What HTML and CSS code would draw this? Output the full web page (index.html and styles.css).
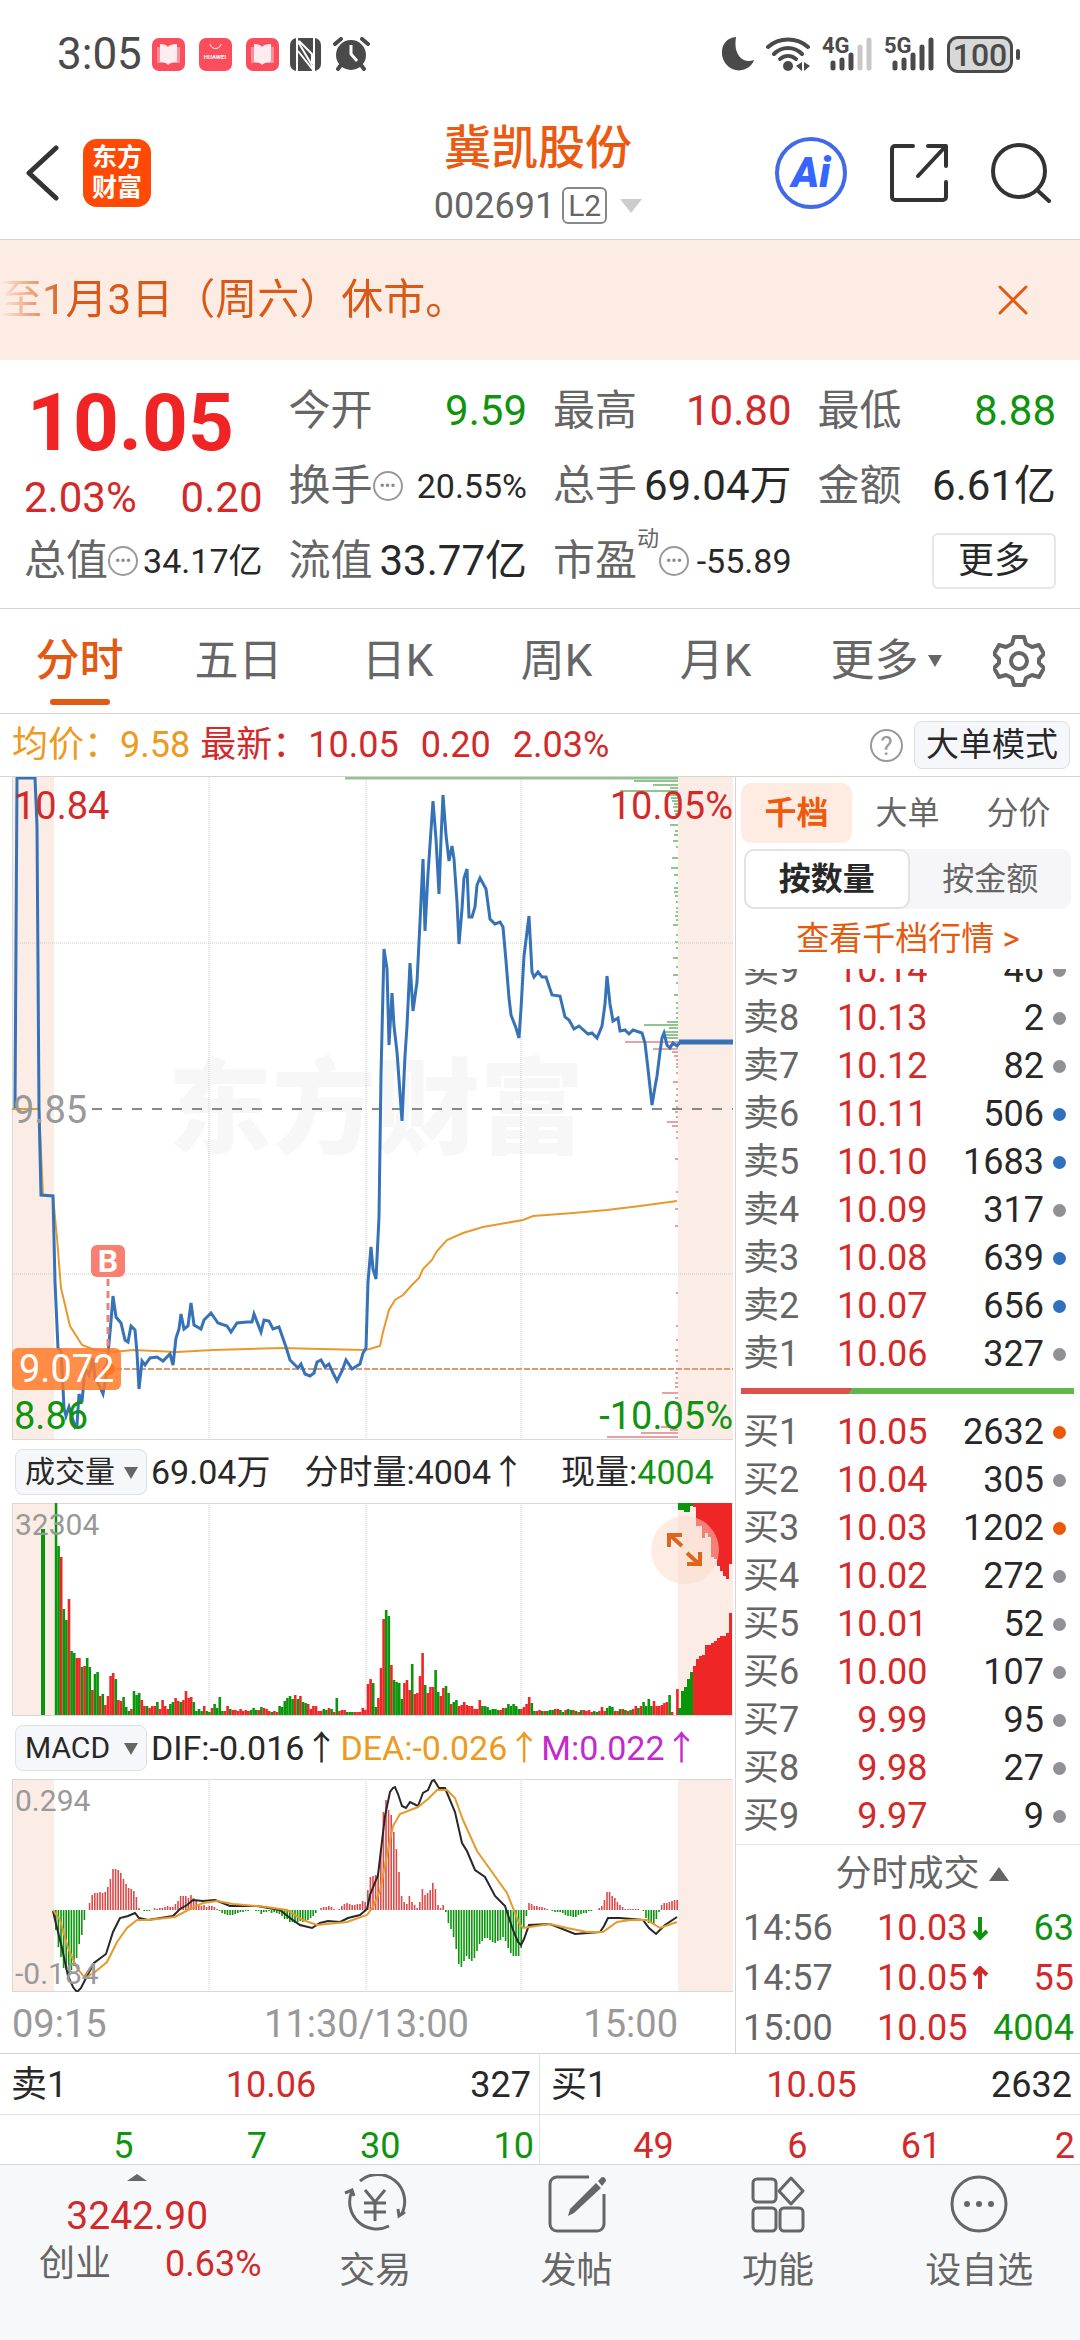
FILE: index.html
```html
<!DOCTYPE html>
<html lang="zh-CN">
<head>
<meta charset="UTF-8">
<meta name="viewport" content="width=device-width, initial-scale=1.0">
<title>冀凯股份 002691</title>
<link rel="stylesheet" href="styles.css">
</head>
<body>
    <div class="statusbar">
        <span class="time">3:05</span>
        <svg class="app-dot" viewBox="0 0 33 33"><rect width="33" height="33" rx="7" fill="#fb4d5c"/><path d="M5 9h23v16H5z" fill="#fd8f98"/><path d="M8 6c4 0 7 1 8 3 1-2 5-3 9-3v18c-4 0-7 1-9 3-1-2-4-3-8-3z" fill="#ffecee"/></svg>
        <svg class="app-dot" viewBox="0 0 33 33"><rect width="33" height="33" rx="7" fill="#fb4d5c"/><path d="M11 6c1 6 10 6 11 0" fill="none" stroke="#fff" stroke-width="1"/><text x="16" y="21" text-anchor="middle" font-size="6" font-weight="700" fill="#fff">HUAWEI</text></svg>
        <svg class="app-dot" viewBox="0 0 33 33"><rect width="33" height="33" rx="7" fill="#fb4d5c"/><path d="M5 9h23v16H5z" fill="#fd8f98"/><path d="M8 6c4 0 7 1 8 3 1-2 5-3 9-3v18c-4 0-7 1-9 3-1-2-4-3-8-3z" fill="#ffecee"/></svg>
        <svg width="31" height="33" viewBox="0 0 31 33"><rect x="0" y="0" width="31" height="33" rx="7" fill="#4a4a4a"/><path d="M7 0v33M7 2l16 27V33M24 33V0M8 13l15 19M9 3l13 13v10" fill="none" stroke="#fff" stroke-width="2"/></svg>
        <svg class="alarm" width="37" height="34" viewBox="0 0 37 34"><circle cx="18" cy="18" r="15" fill="#4a4a4a"/><path d="M2 7l6-5M35 7l-6-5M8 28l-3 4M28 28l3 4" stroke="#4a4a4a" stroke-width="4" stroke-linecap="round"/><path d="M18 8v9l6 7" fill="none" stroke="#fff" stroke-width="3"/></svg>
        <span class="spacer"></span>
        <svg class="moon" width="32" height="34" viewBox="0 0 32 34"><path d="M14 0C3 1-1 10 0 18c2 11 11 17 20 15 6-1 11-6 12-10-6 2-11 1-15-4-4-6-4-12-3-19z" fill="#4a4a4a"/></svg>
        <svg class="wifi" width="45" height="34" viewBox="0 0 45 34"><g fill="none" stroke="#4a4a4a" stroke-width="4" stroke-linecap="round"><path d="M2 10C13 0 31 0 42 10"/><path d="M8 17c8-8 20-8 28 0"/><path d="M14 22c5-4 11-4 16 0"/></g><circle cx="22" cy="29" r="5" fill="#4a4a4a"/><path d="M36 25v9l-6-5zM38 25v9l6-5z" fill="#4a4a4a"/></svg>
        <span class="signal">
            <b>4G</b>
            <svg width="50" height="34" viewBox="0 0 50 34"><g stroke-width="5" stroke-linecap="round" stroke="#4a4a4a"><path d="M10 26v5M19 23v8M28 18v13"/><path d="M37 10v21M46 3v28" stroke="#c8c8c8"/></g></svg>
        </span>
        <span class="signal">
            <b>5G</b>
            <svg width="50" height="34" viewBox="0 0 50 34"><g stroke-width="5" stroke-linecap="round" stroke="#4a4a4a"><path d="M10 26v5M19 23v8M28 18v13M37 10v21M46 3v28"/></g></svg>
        </span>
        <span class="battery">100</span>
    </div>

    <header class="nav">
        <div class="nav-left">
            <button class="icon-btn" aria-label="返回"><svg width="34" height="56" viewBox="0 0 34 56"><path d="M31 3L4 28l27 25" fill="none" stroke="#333" stroke-width="5" stroke-linecap="round" stroke-linejoin="round"/></svg></button>
            <a class="logo" href="#">东方<br>财富</a>
        </div>
        <div class="nav-title">
            <h1>冀凯股份</h1>
            <div class="code">002691<span class="level">L2</span><i class="tri tri-light"></i></div>
        </div>
        <div class="nav-right">
            <button class="icon-btn ai">Ai</button>
            <button class="icon-btn" aria-label="分享"><svg width="60" height="60" viewBox="0 0 60 60"><path d="M24 3H6a3 3 0 0 0-3 3v48a3 3 0 0 0 3 3h48a3 3 0 0 0 3-3V39M39 3h18v20M56 4L29 33" fill="none" stroke="#333" stroke-width="4" stroke-linecap="round" stroke-linejoin="round"/></svg></button>
            <button class="icon-btn" aria-label="搜索"><svg width="60" height="60" viewBox="0 0 60 60"><circle cx="28" cy="28" r="26" fill="none" stroke="#333" stroke-width="4"/><path d="M46 47l12 11" stroke="#333" stroke-width="4" stroke-linecap="round"/></svg></button>
        </div>
    </header>

    <div class="notice">
        <p>至1月3日（周六）休市。</p>
        <button class="icon-btn" aria-label="关闭"><svg width="30" height="30" viewBox="0 0 30 30"><path d="M2 2l26 26M28 2L2 28" stroke="#e05a14" stroke-width="3" stroke-linecap="round"/></svg></button>
    </div>

    <section class="quote">
        <div class="price">
            <strong>10.05</strong>
            <div class="pair red"><span>2.03%</span><span>0.20</span></div>
        </div>
        <div class="pair"><span>今开</span><b class="green">9.59</b></div>
        <div class="pair"><span>最高</span><b class="red">10.80</b></div>
        <div class="pair"><span>最低</span><b class="green">8.88</b></div>
        <div class="pair"><span>换手<i class="info">•••</i></span><b class="small">20.55%</b></div>
        <div class="pair"><span>总手</span><b>69.04万</b></div>
        <div class="pair"><span>金额</span><b>6.61亿</b></div>
        <div class="pair"><span>总值<i class="info">•••</i></span><b class="small">34.17亿</b></div>
        <div class="pair"><span>流值</span><b>33.77亿</b></div>
        <div class="pair"><span>市盈<sup>动</sup><i class="info">•••</i></span><b class="small">-55.89</b></div>
        <div class="pair more"><button>更多</button></div>
    </section>

    <nav class="tabs">
        <button class="active">分时</button>
        <button>五日</button>
        <button>日K</button>
        <button>周K</button>
        <button>月K</button>
        <button>更多<i class="tri tri-tab"></i></button>
        <button aria-label="设置"><svg width="52" height="52" viewBox="0 0 52 52"><path d="M21 2h10l2 7 6 3 7-2 5 9-5 5v4l5 5-5 9-7-2-6 3-2 7H21l-2-7-6-3-7 2-5-9 5-5v-4l-5-5 5-9 7 2 6-3z" fill="none" stroke="#666" stroke-width="4" stroke-linejoin="round"/><circle cx="26" cy="26" r="8" fill="none" stroke="#666" stroke-width="4"/></svg></button>
    </nav>

    <div class="summary">
        <span class="orange">均价：9.58</span>
        <span class="red">最新：10.05</span>
        <span class="red">0.20</span>
        <span class="red">2.03%</span>
        <i class="help">?</i>
        <button class="chip">大单模式</button>
    </div>

    <main class="board">
        <div class="charts">
            <div class="chart">
                <svg viewBox="0 0 721 663">
                    <rect class="shade" x="0" y="0" width="42" height="663"/>
                    <rect class="shade" x="666" y="0" width="55" height="663"/>
                    <text class="watermark" x="156" y="369">东方财富</text>
                    <path class="grid" d="M197 0v663M354 0v663M509 0v663M0 166h721M0 497h721"/>
                    <path class="frame" d="M0 0v663M0 663h721"/>
                    <path d="M80 332h641" stroke="#888" stroke-width="2" stroke-dasharray="10 10"/>
                    <path d="M333 1h333" stroke="#92c492" stroke-width="3"/>
                    <g id="depth"></g>
                    <path d="M104 592h617" stroke="#d99a78" stroke-width="2" stroke-dasharray="6 2"/>
                    <polyline class="avg" points="0,332 27,332 31,418 41,419 45,461 49,511 58,549 70,568 83,573 101,575 121,573 165,575 201,573 271,571 308,572 354,573 368,569 371,555 377,533 383,523 391,518 400,508 407,501 411,492 420,483 425,474 435,463 451,456 471,450 511,443 521,439 561,436 595,433 628,429 665,424"/>
                    <polyline class="line" points="3,331 5,1 23,1 25,49 27,331 29,418 41,419 43,505 46,571 49,574 51,611 52,631 54,639 57,630 61,643 63,650 65,648 67,617 70,625 73,591 77,598 81,581 83,602 87,608 91,617 94,600 99,544 101,519 104,540 109,546 113,563 116,565 119,549 123,553 125,576 127,612 130,584 133,588 138,581 145,580 151,584 158,577 161,588 164,561 167,552 169,537 172,552 176,549 179,526 182,548 189,552 192,543 199,536 206,546 215,549 219,555 225,546 235,545 240,545 242,537 249,555 252,543 257,544 261,552 267,550 274,570 278,583 286,591 289,587 293,597 298,599 302,596 305,585 309,583 313,590 317,587 321,596 325,604 330,594 334,583 340,592 348,587 351,576 354,571 356,505 359,470 361,492 364,502 367,440 369,297 372,172 375,192 377,268 380,216 382,249 385,275 390,344 393,279 395,249 398,186 401,234 405,205 408,145 411,82 413,154 416,97 421,24 424,62 427,117 429,62 431,18 434,58 437,84 440,69 442,82 445,125 447,167 450,132 452,101 455,92 457,140 460,140 463,130 465,108 468,101 474,112 478,142 483,147 488,145 491,150 494,184 497,221 499,238 504,251 507,261 509,232 512,179 517,139 520,195 522,200 526,195 530,200 534,200 540,218 548,219 553,240 557,243 562,252 567,249 576,257 580,256 585,261 590,249 593,227 595,199 598,227 601,244 606,241 608,254 613,253 617,257 621,253 630,256 633,266 636,292 640,328 643,310 645,299 648,275 650,261 652,256 655,268 658,271 661,266 665,269 668,265"/>
                    <path d="M667 265h54" stroke="#3572b8" stroke-width="5"/>
                    <path d="M96 502v90" stroke="#e8837b" stroke-width="3" stroke-dasharray="7 5"/>
                    <rect x="79" y="468" width="34" height="32" rx="6" fill="#f97f70"/>
                    <text class="buy" x="96" y="495">B</text>
                    <circle cx="97" cy="592" r="6" fill="#ff5a00"/>
                </svg>
                <span class="lab lab-top red">10.84</span>
                <span class="lab lab-mid">9.85</span>
                <span class="lab lab-cost">9.072</span>
                <span class="lab lab-bottom green">8.86</span>
                <span class="lab lab-top lab-right red">10.05%</span>
                <span class="lab lab-bottom lab-right green">-10.05%</span>
            </div>

            <div class="legend">
                <label class="pick"><select class="chip" aria-label="指标一"><option>成交量</option></select></label>
                <span class="vol-total">69.04万</span>
                <span class="vol-minute">分时量:4004↑</span>
                <span>现量:<b class="green">4004</b></span>
            </div>
            <div class="chart">
                <svg viewBox="0 0 721 213">
                    <rect class="shade" x="0" y="0" width="42" height="213"/>
                    <rect class="shade" x="666" y="0" width="55" height="213"/>
                    <path class="grid" d="M197 0v213M354 0v213M509 0v213"/>
                    <path class="frame" d="M0 213V0h721M0 213h721"/>
                    <g id="volume"></g>
                </svg>
                <span class="lab lab-small">32304</span>
                <button class="expand" aria-label="放大"><svg width="36" height="36" viewBox="0 0 36 36"><path d="M15 14L3 3M2 15V3h13M20 21l12 11M33 20v12H20" fill="none" stroke="#e0641c" stroke-width="4"/></svg></button>
            </div>

            <div class="legend">
                <label class="pick"><select class="chip" aria-label="指标二"><option>MACD</option></select></label>
                <span class="dif-value">DIF:-0.016↑</span>
                <span class="orange">DEA:-0.026↑</span>
                <span class="purple">M:0.022↑</span>
            </div>
            <div class="chart">
                <svg viewBox="0 0 721 213">
                    <rect class="shade" x="0" y="0" width="42" height="213"/>
                    <rect class="shade" x="666" y="0" width="55" height="213"/>
                    <path class="grid" d="M197 0v213M354 0v213M509 0v213"/>
                    <path class="frame" d="M0 213V0h721M0 213h721"/>
                    <g id="macd"></g>
                    <polyline class="dif" points="41,132 44,145 50,169 56,197 61,208 65,213 69,209 73,201 82,184 94,175 101,153 108,139 116,137 123,134 127,139 136,141 161,137 168,130 175,126 181,121 191,122 203,121 218,127 245,127 268,131 278,139 288,146 300,149 308,144 316,142 328,143 336,139 348,136 355,130 358,116 366,96 373,37 378,13 381,9 383,8 386,15 390,27 394,29 398,23 406,27 411,14 416,11 420,2 422,1 427,9 433,9 443,33 450,64 455,72 463,91 473,98 483,117 493,127 501,151 506,163 509,166 512,160 517,146 538,145 563,155 588,153 592,147 596,139 608,139 631,141 637,149 644,155 653,146 665,138"/>
                    <polyline class="dea" points="41,131 48,141 56,169 65,189 73,199 83,193 95,183 105,163 115,149 125,141 136,141 163,138 178,130 191,124 205,122 221,125 255,128 275,131 291,141 305,146 335,143 355,136 361,128 368,112 375,76 381,47 388,35 406,28 416,20 425,11 435,11 443,19 451,41 465,72 485,100 495,114 503,134 507,144 511,149 538,145 555,149 575,153 591,153 605,143 618,141 635,141 648,149 665,143"/>
                </svg>
                <span class="lab lab-small">0.294</span>
                <span class="lab lab-small lab-low">-0.184</span>
            </div>
            <div class="axis"><span>09:15</span><span>11:30/13:00</span><span class="axis-end">15:00</span></div>
        </div>

        <aside class="side">
            <div class="side-tabs">
                <button class="active">千档</button>
                <button>大单</button>
                <button>分价</button>
            </div>
            <div class="segment">
                <button class="active">按数量</button>
                <button>按金额</button>
            </div>
            <a class="depth-link" href="#">查看千档行情 &gt;</a>
            <div class="asks">
                <table class="book">
                    <tr><th>卖9</th><td>10.14</td><td>46</td><td><i class="dot"></i></td></tr>
                    <tr><th>卖8</th><td>10.13</td><td>2</td><td><i class="dot"></i></td></tr>
                    <tr><th>卖7</th><td>10.12</td><td>82</td><td><i class="dot"></i></td></tr>
                    <tr><th>卖6</th><td>10.11</td><td>506</td><td><i class="dot dot-blue"></i></td></tr>
                    <tr><th>卖5</th><td>10.10</td><td>1683</td><td><i class="dot dot-blue"></i></td></tr>
                    <tr><th>卖4</th><td>10.09</td><td>317</td><td><i class="dot"></i></td></tr>
                    <tr><th>卖3</th><td>10.08</td><td>639</td><td><i class="dot dot-blue"></i></td></tr>
                    <tr><th>卖2</th><td>10.07</td><td>656</td><td><i class="dot dot-blue"></i></td></tr>
                    <tr><th>卖1</th><td>10.06</td><td>327</td><td><i class="dot"></i></td></tr>
                </table>
            </div>
            <div class="ratio"></div>
            <table class="book">
                <tr><th>买1</th><td>10.05</td><td>2632</td><td><i class="dot dot-orange"></i></td></tr>
                <tr><th>买2</th><td>10.04</td><td>305</td><td><i class="dot"></i></td></tr>
                <tr><th>买3</th><td>10.03</td><td>1202</td><td><i class="dot dot-orange"></i></td></tr>
                <tr><th>买4</th><td>10.02</td><td>272</td><td><i class="dot"></i></td></tr>
                <tr><th>买5</th><td>10.01</td><td>52</td><td><i class="dot"></i></td></tr>
                <tr><th>买6</th><td>10.00</td><td>107</td><td><i class="dot"></i></td></tr>
                <tr><th>买7</th><td>9.99</td><td>95</td><td><i class="dot"></i></td></tr>
                <tr><th>买8</th><td>9.98</td><td>27</td><td><i class="dot"></i></td></tr>
                <tr><th>买9</th><td>9.97</td><td>9</td><td><i class="dot"></i></td></tr>
            </table>
            <button class="deals-head">分时成交<i class="tri tri-up"></i></button>
            <table class="deals">
                <tr><th>14:56</th><td>10.03</td><td><svg width="17" height="24" viewBox="0 0 17 24"><path d="M8 1v20M2 15l6 7 7-7" fill="none" stroke="#109410" stroke-width="4"/></svg></td><td class="green">63</td></tr>
                <tr><th>14:57</th><td>10.05</td><td><svg width="17" height="24" viewBox="0 0 17 24"><path d="M8 23V3M2 9l6-7 7 7" fill="none" stroke="#d22a2a" stroke-width="4"/></svg></td><td>55</td></tr>
                <tr><th>15:00</th><td>10.05</td><td></td><td class="green">4004</td></tr>
            </table>
        </aside>
    </main>

    <section class="level1">
        <div class="best"><span>卖1</span><b class="red">10.06</b><span>327</span></div>
        <div class="best"><span>买1</span><b class="red">10.05</b><span>2632</span></div>
        <div class="queue green"><span>5</span><span>7</span><span>30</span><span>10</span></div>
        <div class="queue red"><span>49</span><span>6</span><span>61</span><span>2</span></div>
    </section>

    <footer class="bottom">
        <a class="index" href="#">
            <i class="tri tri-up tri-small"></i>
            <strong>3242.90</strong>
            <span class="index-row"><span>创业</span><span class="red">0.63%</span></span>
        </a>
        <button><svg width="64" height="60" viewBox="0 0 64 60"><g fill="none" stroke="#666" stroke-width="3"><path d="M17 7a27 27 0 0 1 41 34M46 52A27 27 0 0 1 9 17M2 19l7-3 2 6M62 38l-6 4-1-7"/><path d="M22 16l10 12 10-12M32 28v19M21 29h22M21 38h22"/></g></svg>交易</button>
        <button><svg width="60" height="60" viewBox="0 0 60 60"><path d="M42 3H10a7 7 0 0 0-7 7v40a7 7 0 0 0 7 7h40a7 7 0 0 0 7-7V20" fill="none" stroke="#666" stroke-width="3"/><path d="M49 9l5 5-27 25-6 3 2-7zM51 7l4-4c3 0 4 2 4 4l-4 5z" fill="#666"/></svg>发帖</button>
        <button><svg width="56" height="60" viewBox="0 0 56 60"><g fill="none" stroke="#666" stroke-width="3" stroke-linejoin="round"><rect x="3" y="5" width="23" height="23" rx="4"/><rect x="3" y="34" width="23" height="23" rx="4"/><rect x="30" y="34" width="23" height="23" rx="4"/><path d="M41 4l12 13-12 13-12-13z"/></g></svg>功能</button>
        <button><svg width="60" height="60" viewBox="0 0 60 60"><circle cx="30" cy="30" r="27" fill="none" stroke="#666" stroke-width="3"/><circle cx="18" cy="30" r="3" fill="#666"/><circle cx="30" cy="30" r="3" fill="#666"/><circle cx="42" cy="30" r="3" fill="#666"/></svg>设自选</button>
    </footer>

<script src="script.js"></script>
</body>
</html>
```
FILE: styles.css
```css
* {
    box-sizing: border-box;
}
body {
    margin: 0;
    min-height: 100vh;
    display: flex;
    flex-direction: column;
    background-color: #fff;
    color: #282828;
    font-family: Roboto, "Noto Sans CJK SC", sans-serif;
    font-size: 36px;
    line-height: 48px;
}
button, select {
    padding: 0;
    border: 0;
    background: none;
    color: inherit;
    font: inherit;
    cursor: pointer;
}
a {
    color: inherit;
    text-decoration: none;
}
b, i, th {
    font-weight: 400;
    font-style: normal;
}
svg {
    display: block;
}
.red { color: #d22a2a; }
.green { color: #109410; }
.orange { color: #ec9a20; }
.purple { color: #c42acb; }

/* triangles */
.tri {
    display: inline-block;
    border: 7px solid transparent;
    border-bottom-width: 0;
    border-top: 12px solid #666;
}
.tri-light {
    margin-left: 6px;
    border-width: 14px 11px 0;
    border-top-color: #ccc;
}
.tri-up {
    border-width: 0 10px 14px;
    border-bottom-color: #666;
}
.tri-small {
    border-width: 0 10px 7px;
}

/* status bar */
.statusbar {
    display: flex;
    align-items: center;
    height: 108px;
    padding: 0 67px 0 57px;
    color: #4a4a4a;
}
.time {
    margin-right: 10px;
    font-size: 44px;
}
.app-dot {
    width: 33px;
    height: 33px;
    margin-right: 14px;
}
.app-dot + svg:not(.app-dot) {
    margin-left: -3px;
}
.alarm {
    margin-left: 12px;
}
.spacer {
    flex: 1;
}
.wifi {
    margin: 0 12px;
}
.signal {
    position: relative;
    margin-right: 12px;
}
.signal b {
    position: absolute;
    top: -3px;
    left: -1px;
    font-size: 22px;
    font-weight: 700;
    line-height: 24px;
}
.battery {
    position: relative;
    width: 66px;
    height: 37px;
    border: 3px solid #4a4a4a;
    border-radius: 11px;
    background-color: #d8d8d8;
    font-size: 32px;
    font-weight: 500;
    line-height: 32px;
    text-align: center;
}
.battery::after {
    content: "";
    position: absolute;
    top: 10px;
    right: -10px;
    width: 4px;
    height: 11px;
    border-radius: 2px;
    background-color: #4a4a4a;
}

/* title bar */
.nav {
    display: grid;
    grid-template-columns: 1fr auto 1fr;
    align-items: center;
    height: 132px;
    padding: 0 29px 2px 25px;
    border-bottom: 1px solid #d5d5d5;
}
.nav-left, .nav-right {
    display: flex;
    align-items: center;
    gap: 24px;
}
.nav-right {
    justify-content: flex-end;
    gap: 42px;
}
.logo {
    width: 68px;
    height: 68px;
    padding: 4px 0;
    border-radius: 14px;
    background-color: #ff4a05;
    color: #fff;
    font-size: 25px;
    font-weight: 700;
    line-height: 30px;
    text-align: center;
}
.nav-title {
    padding-top: 2px;
    text-align: center;
}
.nav-title h1 {
    margin: 0;
    color: #ea5a12;
    font-size: 47px;
    font-weight: 500;
    line-height: 64px;
}
.code {
    display: flex;
    align-items: center;
    justify-content: center;
    gap: 7px;
    height: 52px;
    color: #666;
}
.level {
    padding: 0 4px;
    border: 2px solid #888;
    border-radius: 6px;
    font-size: 30px;
    line-height: 33px;
}
.ai {
    width: 72px;
    height: 72px;
    border: 4px solid #4169e8;
    border-radius: 50%;
    color: #3566ff;
    font-size: 42px;
    font-weight: 900;
    font-style: italic;
    line-height: 60px;
}

/* notice */
.notice {
    display: flex;
    align-items: center;
    justify-content: space-between;
    height: 120px;
    padding-right: 52px;
    background-color: #fcece3;
    color: #d95a18;
    font-size: 42px;
}
.notice p {
    margin: 0;
    mask-image: linear-gradient(to right, transparent, #000 64px);
}

/* quote */
.quote {
    display: grid;
    grid-template-columns: repeat(4, 1fr);
    grid-auto-rows: 75px;
    column-gap: 26px;
    padding: 13px 24px 10px;
    border-bottom: 1px solid #d5d5d5;
    font-size: 42px;
    white-space: nowrap;
}
.price {
    grid-row: span 2;
}
.price strong {
    display: block;
    padding-left: 3px;
    color: #f02424;
    font-size: 80px;
    font-weight: 700;
    line-height: 101px;
}
.pair {
    display: flex;
    align-items: center;
    justify-content: space-between;
    color: #666;
}
.pair span {
    display: flex;
    align-items: center;
}
.pair b {
    color: #282828;
}
.pair.red, .pair .red {
    color: #d22a2a;
}
.pair .green {
    color: #109410;
}
.pair .small {
    font-size: 34px;
}
.pair sup {
    align-self: flex-start;
    margin-top: -10px;
    font-size: 22px;
    line-height: 24px;
}
.info {
    width: 30px;
    height: 30px;
    border: 2px solid #999;
    border-radius: 50%;
    color: #888;
    font-size: 16px;
    line-height: 26px;
    text-align: center;
}
.more {
    justify-content: flex-end;
}
.more button {
    width: 124px;
    height: 56px;
    border: 2px solid #e4e6e8;
    border-radius: 6px;
    color: #282828;
    font-size: 36px;
    line-height: 48px;
}

/* period tabs */
.tabs {
    display: grid;
    grid-template-columns: repeat(5, 159fr) 182fr 83fr;
    height: 105px;
    padding-right: 20px;
    border-bottom: 1px solid #d5d5d5;
    color: #666;
    font-size: 44px;
}
.tabs button {
    position: relative;
    display: flex;
    align-items: center;
    justify-content: center;
    gap: 9px;
}
.tabs .active {
    color: #e05a14;
    font-weight: 500;
}
.tabs .active::after {
    content: "";
    position: absolute;
    bottom: 8px;
    left: 50%;
    width: 60px;
    height: 6px;
    margin-left: -30px;
    border-radius: 3px;
    background-color: #e05a14;
}

.summary {
    display: flex;
    align-items: center;
    gap: 22px;
    height: 63px;
    padding: 0 10px 0 12px;
    border-bottom: 1px solid #d5d5d5;
}
.summary .orange {
    margin-right: -12px;
}
.help {
    width: 33px;
    height: 33px;
    margin-left: auto;
    margin-right: -11px;
    border: 2px solid #999;
    border-radius: 50%;
    color: #999;
    font-size: 26px;
    line-height: 30px;
    text-align: center;
}
.chip {
    height: 48px;
    padding: 0 11px;
    border: 1px solid #dcdfe3;
    border-radius: 8px;
    background-color: #f6f7fa;
    font-size: 33px;
    line-height: 44px;
}

/* charts */
.board {
    display: grid;
    grid-template-columns: 736fr 344fr;
    border-bottom: 1px solid #d5d5d5;
}
.charts {
    padding: 0 2px 0 12px;
    border-right: 1px solid #d5d5d5;
}
.chart {
    position: relative;
}
.chart > svg {
    width: 100%;
    height: auto;
}
.shade {
    fill: #fcece6;
}
.grid {
    fill: none;
    stroke: #ccc;
    stroke-dasharray: 1 1;
}
.frame {
    fill: none;
    stroke: #d8d8d8;
    stroke-width: 2;
}
.watermark {
    fill: #f7f7f7;
    font-size: 104px;
    font-weight: 900;
}
.line, .avg, .dif, .dea {
    fill: none;
    stroke: #3572b8;
    stroke-width: 3;
}
.avg, .dea {
    stroke: #e69a2c;
    stroke-width: 2;
}
.dif {
    stroke: #282828;
    stroke-width: 2;
}
.buy {
    fill: #fff;
    font-size: 32px;
    font-weight: 700;
    text-anchor: middle;
}
.up { fill: #ee2626; }
.down { fill: #0a960a; }
#macd .up { fill: #dc4a4a; }
.ask { fill: #92c492; }
.bid { fill: #e8a0a0; }

.lab {
    position: absolute;
    left: 2px;
    font-size: 38px;
    line-height: 40px;
}
.lab-top {
    top: 9px;
}
.lab-mid {
    top: 50%;
    left: 1px;
    margin-top: -19px;
    color: #999;
}
.lab-cost {
    bottom: 50px;
    left: 0;
    padding: 0 7px;
    border-radius: 6px;
    background-color: rgba(255, 122, 40, 0.85);
    color: #fff;
    line-height: 42px;
}
.lab-bottom {
    bottom: 4px;
}
.lab-right {
    left: auto;
    right: 0;
}
.lab-small {
    top: 2px;
    left: 3px;
    color: #999;
    font-size: 30px;
}
.lab-low {
    top: auto;
    bottom: -2px;
}
.legend {
    display: flex;
    align-items: center;
    height: 63px;
    padding-left: 3px;
    font-size: 34px;
    white-space: nowrap;
}
.pick {
    position: relative;
    margin-right: 4px;
}
.pick::after {
    content: "";
    position: absolute;
    top: 18px;
    right: 9px;
    border: 7px solid transparent;
    border-top: 12px solid #666;
    border-bottom-width: 0;
}
.pick .chip {
    display: block;
    width: 132px;
    height: 46px;
    padding: 0 0 0 9px;
    appearance: none;
    color: #282828;
    font-size: 30px;
}
.vol-total {
    margin-right: 34px;
}
.vol-minute {
    margin-right: 36px;
}
.dif-value {
    margin-right: 2px;
}
.expand {
    position: absolute;
    top: 13px;
    right: 14px;
    display: flex;
    align-items: center;
    justify-content: center;
    width: 68px;
    height: 68px;
    border-radius: 50%;
    background-color: rgba(252, 218, 200, 0.5);
}
.axis {
    display: grid;
    grid-template-columns: 1fr auto 1fr;
    padding: 8px 12px 5px 0;
    color: #999;
    font-size: 38px;
    line-height: 48px;
}
.axis-end {
    padding-right: 43px;
    text-align: right;
}

/* order book */
.side {
    display: flex;
    flex-direction: column;
    padding-top: 6px;
}
.side-tabs, .segment {
    display: flex;
    height: 60px;
    margin: 0 6px 6px 5px;
    color: #666;
    font-size: 32px;
}
.side-tabs button, .segment button {
    flex: 1;
    border-radius: 10px;
}
.side-tabs .active {
    background-color: #feece3;
    color: #f05a0c;
    font-weight: 700;
}
.segment {
    margin: 0 9px 0 8px;
    border-radius: 10px;
    background-color: #f6f6f9;
}
.segment .active {
    border: 2px solid #e2e2e4;
    background-color: #fff;
    color: #282828;
    font-weight: 700;
}
.depth-link {
    color: #e65a10;
    font-size: 33px;
    line-height: 60px;
    text-align: center;
}
.asks {
    overflow: hidden;
}
.asks .book {
    margin-top: -23px;
}
.book, .deals {
    min-width: calc(100% - 11px);
    margin: 0 6px 0 5px;
    border-collapse: collapse;
    table-layout: fixed;
}
.book th, .book td {
    height: 48px;
    padding: 0;
    text-align: right;
}
.book th, .deals th {
    padding-left: 2px;
    color: #666;
    text-align: left;
}
.book th { width: 20%; }
.book td:nth-child(2) { width: 36%; color: #d22a2a; }
.book td:nth-child(3) { width: 35%; }
.dot {
    display: block;
    width: 13px;
    height: 13px;
    margin: 0 auto;
    border-radius: 50%;
    background-color: #909095;
}
.dot-blue { background-color: #3070c0; }
.dot-orange { background-color: #ea580a; }
.ratio {
    height: 6px;
    margin: 10px 6px 14px 5px;
    background: linear-gradient(120deg, #dc504e 33%, #5fb84c 33%);
}
.deals-head {
    display: flex;
    align-items: center;
    justify-content: center;
    gap: 9px;
    height: 58px;
    margin-top: 4px;
    padding-left: 28px;
    border-top: 1px solid #e4e4e4;
    color: #666;
}
.deals th, .deals td {
    height: 50px;
    padding: 2px 0 0;
    color: #d22a2a;
    text-align: right;
}
.deals th { width: 32%; padding-left: 2px; color: #666; text-align: left; }
.deals td:nth-child(2) { width: 36%; }
.deals td:nth-child(3) { width: 7%; padding-left: 5px; }
.deals .green { color: #109410; }

/* best prices */
.level1 {
    display: grid;
    grid-template-columns: 1fr 1fr;
    border-bottom: 1px solid #d5d5d5;
}
.level1 > :nth-child(odd) {
    border-right: 1px solid #e4e4e4;
}
.best, .queue {
    display: grid;
    grid-template-columns: 1fr 1fr 1fr;
    padding: 1px 8px 0 11px;
    line-height: 60px;
}
.best {
    height: 61px;
    border-bottom: 1px solid #e0e0e0;
    text-align: center;
}
.best span:first-child {
    text-align: left;
}
.best span:last-child {
    text-align: right;
}
.queue {
    grid-template-columns: repeat(4, 1fr);
    height: 49px;
    padding: 1px 5px 0 0;
    text-align: right;
}

/* bottom bar */
.bottom {
    flex: 1;
    display: grid;
    grid-template-columns: 274fr repeat(4, 201fr);
    align-items: start;
    background-color: #f7f8fa;
    color: #666;
}
.bottom button {
    display: flex;
    flex-direction: column;
    align-items: center;
    padding-top: 9px;
    gap: 13px;
}
.index {
    display: flex;
    flex-direction: column;
    align-items: center;
    padding-top: 9px;
}
.index strong {
    margin-top: 11px;
    color: #d22a2a;
    font-size: 39px;
    font-weight: 400;
}
.index-row {
    display: flex;
    gap: 54px;
    margin-left: 26px;
}
```
FILE: script.js
```js
const NS = 'http://www.w3.org/2000/svg';
// one minute on the time axis
const STEP = 2.6;
const START = 42;

function bar(group, x, y, w, h, cls) {
    const r = document.createElementNS(NS, 'rect');
    r.setAttribute('x', x);
    r.setAttribute('y', y);
    r.setAttribute('width', w);
    r.setAttribute('height', h);
    r.setAttribute('class', cls);
    group.appendChild(r);
}

// order depth: [y, length]
const asks = [[4,44],[8,25],[11,8],[14,58],[18,12],[21,7],[24,6],[27,4],[30,5],[34,4],[37,3],[48,8],[54,3],[58,4],[64,5],[70,2],[81,6],[91,7],[98,4],[106,2],[111,4],[115,4],[119,3],[125,2],[131,2],[135,2],[139,3],[143,2],[148,5],[158,2],[165,3],[171,2],[181,5],[190,2],[198,5],[206,2],[218,4],[226,2],[231,2],[236,2],[241,2],[245,11],[248,34],[251,9],[255,13],[258,13],[261,12]];
const bids = [[265,53],[268,8],[272,25],[275,6],[279,4],[283,2],[287,2],[290,2],[296,2],[305,5],[312,2],[318,2],[324,3],[330,2],[335,3],[340,2],[345,11],[349,6],[355,2],[361,2],[382,3],[415,2],[432,3],[449,3],[516,2],[549,2],[563,2],[573,3],[579,2],[584,2],[596,3],[601,2],[606,3],[610,3],[616,16],[621,3],[627,3],[633,2],[650,17],[653,8],[656,37],[660,71]];
const depth = document.getElementById('depth');
asks.forEach(([y, w]) => bar(depth, 666 - w, y - 1, w, 2, 'ask'));
bids.forEach(([y, w]) => bar(depth, 666 - w, y - 1, w, 2, 'bid'));

// volume per minute, negative = falling
const volumes = [-212,-169,158,-106,-95,116,-64,-62,57,57,-48,49,-57,-48,25,-41,-43,19,-21,10,19,39,42,-36,15,14,-18,-8,-4,6,-24,-20,-22,15,9,-9,7,9,9,-13,6,15,9,6,-11,-13,17,14,-13,15,24,17,18,-13,-4,-6,-4,9,-4,-3,7,-11,-7,-18,-4,4,9,-6,5,5,4,6,4,5,4,-5,-7,-5,5,-8,7,6,4,-3,4,3,-9,-8,-14,-17,-19,-16,20,-16,19,-13,-12,11,6,9,9,4,4,-6,-5,7,-6,3,-17,4,5,5,-3,-3,-3,3,3,3,7,5,31,36,-32,-8,17,47,96,-105,-99,50,-35,-33,-32,-16,32,35,25,-51,21,22,39,62,-30,22,28,28,-45,-23,19,27,-29,-22,11,-13,-15,9,10,13,10,9,9,6,6,15,-9,-9,-8,-5,-6,-6,-5,5,7,-7,-11,-9,-11,-9,-6,6,8,11,18,-12,-4,4,5,-4,4,-4,-5,-5,6,6,-5,-3,5,-6,-5,5,-4,3,-5,5,4,5,3,-4,-3,4,8,4,-7,-9,-8,4,4,-6,6,-5,4,-5,6,9,-7,9,-13,-9,-16,-9,14,9,9,10,12,13,-20,3,0,26];
const volume = document.getElementById('volume');
volumes.forEach((v, i) => {
    const h = Math.abs(v);
    bar(volume, START + 0.7 + i * STEP, 212 - h, STEP, h, v < 0 ? 'down' : 'up');
});
bar(volume, 29, 26, 4, 186, 'down');

// closing queue on the right, from below and from above
const queueLow = [-7,-24,-28,-36,-43,49,56,59,60,70,70,72,74,77,79,79,82,102];
const queueTop = [-7,-7,-9,-9,-3,4,23,23,35,30,34,54,56,63,68,73,76,61];
queueLow.forEach((v, i) => bar(volume, 666 + i * 3, 212 - Math.abs(v), 3, Math.abs(v), v < 0 ? 'down' : 'up'));
queueTop.forEach((v, i) => bar(volume, 666 + i * 3, 0, 3, Math.abs(v), v < 0 ? 'down' : 'up'));

const macds = [-20,-37,-47,-58,-60,-63,-60,-56,-48,-34,-25,-10,0,7,15,17,17,18,17,18,23,31,41,41,40,37,31,26,22,21,19,13,2,0,-1,-1,-1,0,2,1,2,2,3,4,3,3,6,9,14,14,14,12,15,12,9,5,4,5,3,4,4,3,1,-1,-3,-4,-5,-5,-5,-4,-3,-2,-2,-1,-1,0,0,-1,-1,-4,-2,-2,-1,-3,-2,-3,-4,-6,-9,-9,-12,-12,-13,-12,-11,-12,-11,-10,-8,-6,-3,0,2,3,3,4,3,1,0,1,4,6,7,6,5,5,6,6,9,8,20,33,34,35,37,60,98,110,100,95,78,61,38,14,8,6,14,8,5,2,8,21,15,17,20,27,21,5,2,5,-2,-13,-19,-27,-39,-54,-57,-51,-46,-49,-51,-48,-41,-34,-31,-28,-28,-30,-32,-33,-31,-30,-27,-31,-38,-43,-46,-46,-46,-38,-18,-6,7,6,4,4,3,3,2,1,0,-1,-2,-2,-2,-3,-5,-6,-6,-7,-7,-5,-4,-3,-3,-1,-1,0,0,2,4,10,18,18,14,12,8,5,3,1,1,1,1,1,1,0,-1,-8,-13,-13,-14,-9,-2,5,7,7,8,9,10,10];
const macd = document.getElementById('macd');
macds.forEach((v, i) => {
    const h = Math.abs(v);
    bar(macd, START + 1 + i * STEP, v < 0 ? 131 : 131 - h, 1.6, h, v < 0 ? 'down' : 'up');
});
```
